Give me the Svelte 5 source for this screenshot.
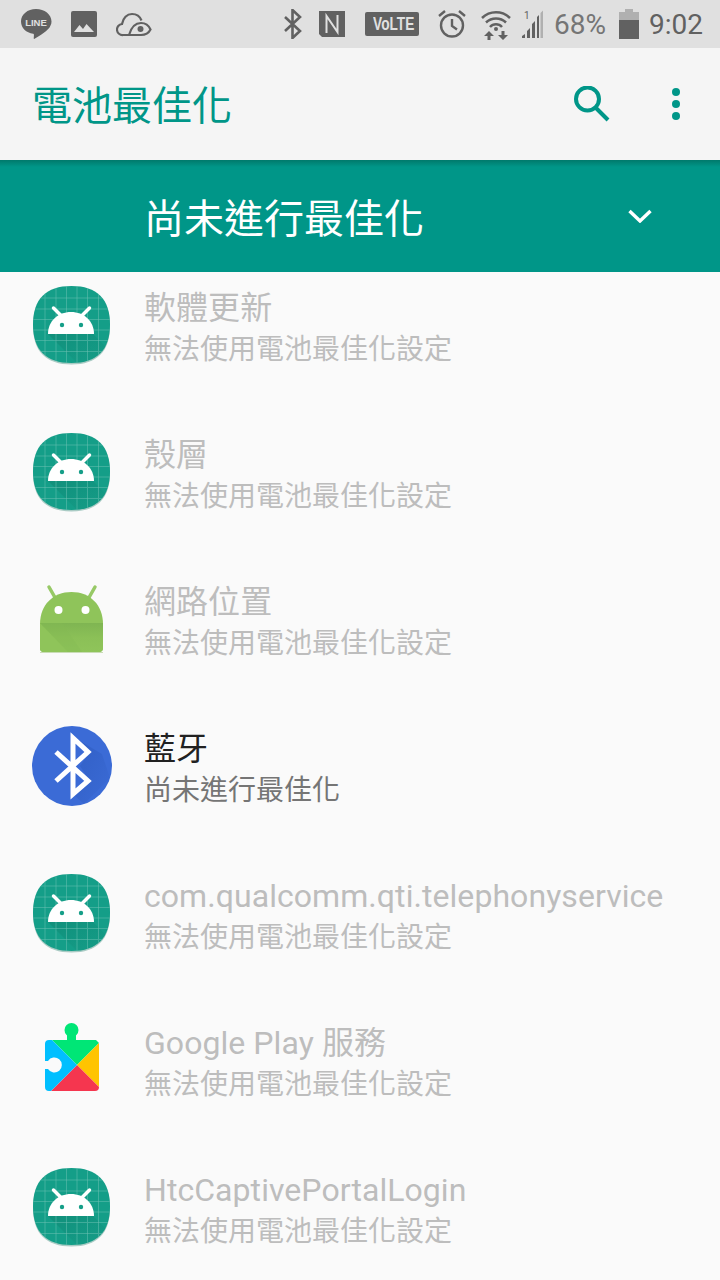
<script>
  const na = '無法使用電池最佳化設定';
  const rows = [
    { icon: 'app', title: '軟體更新', sub: na },
    { icon: 'app', title: '殼層', sub: na },
    { icon: 'green', title: '網路位置', sub: na },
    { icon: 'bt', title: '藍牙', sub: '尚未進行最佳化', active: true },
    { icon: 'app', title: 'com.qualcomm.qti.telephonyservice', sub: na },
    { icon: 'play', title: 'Google Play 服務', sub: na },
    { icon: 'app', title: 'HtcCaptivePortalLogin', sub: na }
  ];
  const grid = [13, 24, 34.500, 45, 55.500, 66.500];
  const squircle = 'M39.500 1C65 1 78 14 78 39.500S65 78 39.500 78 1 65 1 39.500 14 1 39.500 1Z';
</script>

{#snippet appIcon()}
  <svg class="icon" viewBox="0 0 80 80" width="80" height="80">
    <defs>
      <clipPath id="sq"><path d={squircle}/></clipPath>
      <linearGradient id="sh" x1="0" y1="0" x2="1" y2="1">
        <stop offset="0" stop-color="#0a6f60" stop-opacity=".3"/>
        <stop offset="1" stop-color="#0a6f60" stop-opacity="0"/>
      </linearGradient>
    </defs>
    <path d={squircle} fill="#a9cbc4" transform="translate(0 1.500)"/>
    <path d={squircle} fill="#159e88"/>
    <g clip-path="url(#sq)">
      <path d="M16 49H61L80 68V80H47Z" fill="url(#sh)"/>
      {#each grid as g}
        <path d="M{g} 0V80M0 {g}H80" stroke="#6fc2b3" stroke-width="1" opacity=".5"/>
      {/each}
    </g>
    <path d="M21.500 23l7 7M57.500 23l-7 7" stroke="#fff" stroke-width="3.500" stroke-linecap="round"/>
    <path d="M16 49C16 36 26 27 39 27s23 9 23 22Z" fill="#fff"/>
    <circle cx="30" cy="40" r="2.200" fill="#159e88"/><circle cx="49" cy="40" r="2.200" fill="#159e88"/>
  </svg>
{/snippet}

{#snippet greenIcon()}
  <svg class="icon" viewBox="0 0 80 80" width="80" height="80">
    <defs>
      <linearGradient id="fold" x1="0" y1="0" x2="0" y2="1">
        <stop offset="0" stop-color="#7fb552"/>
        <stop offset=".5" stop-color="#8bc057"/>
        <stop offset="1" stop-color="#8fc45a"/>
      </linearGradient>
    </defs>
    <path d="M17 8l8 14M63 8l-8 14" stroke="#97c966" stroke-width="3.500" stroke-linecap="round"/>
    <path d="M8 45C8 26 21 13 39.500 13S71 26 71 45V69a4 4 0 0 1-4 4H12a4 4 0 0 1-4-4Z" fill="#8fc45a"/>
    <path d="M8 44H71V69a4 4 0 0 1-4 4H12a4 4 0 0 1-4-4Z" fill="url(#fold)"/>
    <path d="M8 44L36 73H12a4 4 0 0 1-4-4Z" fill="#8fc45a"/>
    <path d="M8 44H30L50 73H36Z" fill="#84ba52" opacity=".35"/>
    <path d="M8 73.500H71" stroke="#c9dcb5" stroke-width="1"/>
    <circle cx="26.500" cy="31" r="4" fill="#fff"/><circle cx="53.500" cy="31" r="4" fill="#fff"/>
  </svg>
{/snippet}

{#snippet btIcon()}
  <svg class="icon" viewBox="0 0 80 80" width="80" height="80">
    <defs>
      <linearGradient id="btsh" x1="0" y1="0" x2="1" y2="1">
        <stop offset="0" stop-color="#2450b0" stop-opacity=".45"/>
        <stop offset="1" stop-color="#2450b0" stop-opacity="0"/>
      </linearGradient>
    </defs>
    <circle cx="40" cy="40" r="40" fill="#3b6bd6"/>
    <path d="M43 12L58 26 48 40 58 55 42 69 52 78 78 52 70 28 Z" fill="url(#btsh)"/>
    <path d="M24 26L56 55 41 68V12L56 26 24 55" fill="none" stroke="#fff" stroke-width="5"/>
  </svg>
{/snippet}

{#snippet playIcon()}
  <svg class="icon" viewBox="0 0 80 80" width="80" height="80">
    <circle cx="39.500" cy="10" r="7" fill="#00e676"/>
    <path d="M35 14h9v7h-9Z" fill="#00e676"/>
    <path d="M20 20H64L67 23 45 45Z" fill="#00e676"/>
    <path d="M67 23V67L45 45Z" fill="#ffc400"/>
    <path d="M19 71H63Q67 71 67 67L45 45Z" fill="#f5364f"/>
    <path d="M17 20H20L45 45 19 71H17Q13 71 13 67V49H16A7.500 7.500 0 1 0 16 41H13V24Q13 20 17 20Z" fill="#00bfff"/>
  </svg>
{/snippet}

<div class="screen">
  <div class="status">
    <div class="group left">
      <svg viewBox="0 0 32 32" width="32" height="32"><path d="M16 1C7.500 1 1 6.500 1 13.500c0 6.300 5.200 11.300 12.200 12.300.8.200.8 1 .7 2l-.2 2.500c0 .6.500.8 1.300.3 3.500-2.400 14-8 15.500-13 .7-1.300 1-2.600 1-4.100C31.500 6.500 24.500 1 16 1Z" fill="#616161"/><text x="16" y="17.500" class="line-t">LINE</text></svg>
      <svg viewBox="0 0 26 26" width="26" height="26"><rect width="26" height="26" rx="2" fill="#616161"/><path d="M3 21l5.500-7 3.500 4 3.500-5 7.500 8Z" fill="#e0e0e0"/></svg>
      <svg class="cloud" viewBox="0 0 36 26" width="36" height="26" fill="none" stroke="#616161" stroke-width="2.200"><path d="M13 24H7a5.500 5.500 0 0 1-1-11C7 7 11 3 16 3c4.500 0 8 2.500 9.500 6.500"/><path d="M13 24C15 17 19 12 25 12c4.500 0 8 3 9.500 6.500-1.500 3-4.500 5.500-9.500 5.500Z"/><circle cx="24.500" cy="18" r="3" fill="#616161" stroke="none"/></svg>
    </div>
    <div class="group right">
      <svg viewBox="0 0 20 30" width="20" height="30" fill="none" stroke="#616161" stroke-width="2.600"><path d="M2 8l15 14-7.500 7V1L17 8 2 22"/></svg>
      <svg class="nfc" viewBox="0 0 26 26" width="26" height="26"><path d="M0 0H26V26H3L0 23Z" fill="#616161"/><path d="M7.500 22V5L18.500 21V4" fill="none" stroke="#e0e0e0" stroke-width="2"/></svg>
      <div class="volte"><span>VoLTE</span></div>
      <svg class="alarm" viewBox="0 0 30 30" width="30" height="30" fill="none" stroke="#616161" stroke-width="2.400"><circle cx="15" cy="16.500" r="11"/><path d="M15 10v7l5 3.500M2 7l6-5M28 7l-6-5"/></svg>
      <svg class="wifi" viewBox="0 0 30 32" width="30" height="32"><path d="M1 10a20 20 0 0 1 28 0M5 14.500a14.500 14.500 0 0 1 20 0M9 19a8 8 0 0 1 12 0" fill="none" stroke="#616161" stroke-width="2.500"/><circle cx="15" cy="21" r="2" fill="#616161"/><path d="M8 23l-5 5h3.500v4h3v-4H13ZM22 32l5-5h-3.500v-4h-3v4H17Z" fill="#616161"/></svg>
      <svg class="signal" viewBox="0 0 24 28" width="24" height="28"><path d="M2 28v-2l3-2v4ZM7 28v-7l3-3v10ZM12 28V14l3-3v17Z" fill="#616161"/><path d="M17 28V7l2-2v23Z" fill="#616161"/><path d="M20.500 28V3l2.500-2.500V28Z" fill="#b0b0b0"/><text x="4" y="9" class="sig-t">1</text></svg>
      <span class="pct">68%</span>
      <svg class="batt" viewBox="0 0 20 30" width="20" height="30"><path d="M6 0h8v3h6v27H0V3h6Z" fill="#b0b0b0"/><path d="M0 11H20V30H0Z" fill="#616161"/></svg>
      <span class="time">9:02</span>
    </div>
  </div>

  <div class="toolbar">
    <h1>電池最佳化</h1>
    <svg class="search" viewBox="0 0 36 36" width="36" height="36" fill="none" stroke="#009688" stroke-width="4"><circle cx="13.500" cy="13" r="11.500"/><path d="M21.500 21.500L34 34"/></svg>
    <div class="more"><i></i><i></i><i></i></div>
  </div>

  <div class="spinner">
    <span>尚未進行最佳化</span>
    <svg viewBox="0 0 24 14" width="24" height="14" fill="none" stroke="#fff" stroke-width="3.400"><path d="M1.500 2L12 12 22.500 2"/></svg>
  </div>

  <div class="list">
    <div class="inner">
      {#each rows as r}
        <div class="row" class:active={r.active}>
          <div class="slot">
            {#if r.icon === 'app'}{@render appIcon()}
            {:else if r.icon === 'green'}{@render greenIcon()}
            {:else if r.icon === 'bt'}{@render btIcon()}
            {:else}{@render playIcon()}{/if}
          </div>
          <div class="text">
            <div class="title">{r.title}</div>
            <div class="sub">{r.sub}</div>
          </div>
        </div>
      {/each}
    </div>
  </div>
</div>

<style>
  :global(body) { margin: 0; background: #fafafa; }
  .screen {
    width: 720px; height: 1280px; overflow: hidden; background: #fafafa;
    display: flex; flex-direction: column;
    font-family: Roboto, "Noto Sans CJK TC", sans-serif;
  }
  .status {
    height: 48px; flex: none; background: #e0e0e0; display: flex;
    justify-content: space-between; align-items: center; padding: 0 17px 0 20px; box-sizing: border-box;
  }
  .group { display: flex; align-items: center; }
  .left { gap: 19px; }
  .line-t { font: 700 9.500px "Liberation Sans", sans-serif; fill: #e0e0e0; text-anchor: middle; }
  .sig-t { font: 400 10px Roboto, sans-serif; fill: #616161; }
  .nfc { margin-left: 16px; }
  .volte {
    margin-left: 20px; width: 54px; height: 24px; border-radius: 2px; background: #616161; color: #e0e0e0;
    font: 700 19px/24px "Liberation Sans", sans-serif; text-align: center; overflow: hidden;
  }
  .volte span { display: inline-block; transform: scaleX(.72); }
  .alarm { margin-left: 18px; }
  .wifi { margin-left: 14px; }
  .signal { margin-left: 9px; }
  .pct { margin-left: 10px; font-size: 28px; color: #757575; }
  .batt { margin-left: 13px; }
  .time { margin-left: 10px; font-size: 28px; color: #616161; }

  .toolbar {
    height: 112px; flex: none; background: #f5f5f5; display: flex; align-items: center;
    padding-left: 32px; box-sizing: border-box;
  }
  h1 { margin: 6px 0 0; flex: 1; font-size: 40px; font-weight: 400; color: #009688; line-height: 1; }
  .search { margin-right: 62px; }
  .more { display: flex; flex-direction: column; gap: 4px; margin-right: 40px; }
  .more i { width: 8px; height: 8px; border-radius: 50%; background: #009688; display: block; }

  .spinner {
    height: 112px; flex: none; background: linear-gradient(#00796b 0, #009688 7px); display: flex; align-items: center;
    justify-content: space-between; padding: 0 68px 0 144px; box-sizing: border-box; color: #fff;
  }
  .spinner span { font-size: 40px; line-height: 1; margin-top: 8px; }
  .spinner svg { margin-top: -1px; }

  .list { flex: 1; overflow: hidden; }
  .inner { margin-top: -21px; }
  .row { height: 147px; display: flex; align-items: center; box-sizing: border-box; }
  .slot { width: 144px; padding-left: 32px; box-sizing: border-box; flex: none; display: flex; }
  .icon { display: block; }
  .text { padding-top: 9px; }
  .title { font-size: 32px; line-height: 40px; letter-spacing: .06px; color: #bdbdbd; white-space: nowrap; }
  .sub { font-size: 28px; line-height: 40px; margin-top: 2px; color: #bdbdbd; white-space: nowrap; }
  .active .title { color: #212121; }
  .active .sub { color: #757575; }
</style>
